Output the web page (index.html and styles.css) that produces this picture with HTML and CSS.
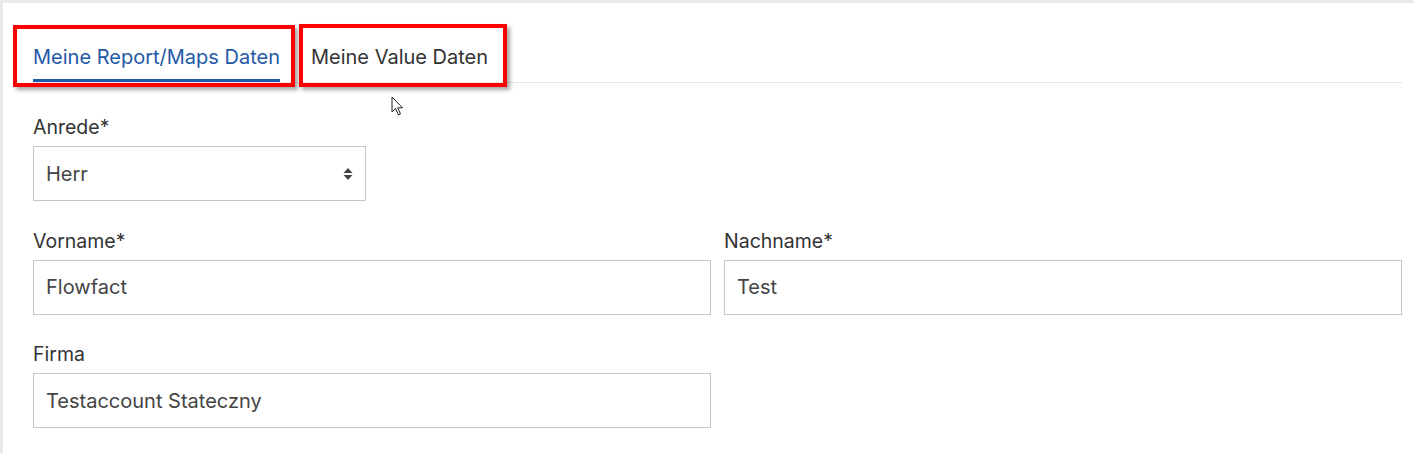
FILE: index.html
```html
<!DOCTYPE html>
<html lang="de">
<head>
<meta charset="utf-8">
<link rel="stylesheet" href="styles.css">
</head>
<body>
<div class="frame">
  <div class="content">
    <nav class="tabs">
      <div class="tab active">Meine Report/Maps Daten</div>
      <div class="tab">Meine Value Daten</div>
    </nav>
    <form class="form">
      <div class="row">
        <div class="field narrow">
          <label class="label">Anrede*</label>
          <div class="control select">
            <span>Herr</span>
            <svg class="caret" width="10" height="14" viewBox="0 0 10 14"><path d="M5 1 L9.5 6 H0.5 Z M5 13 L9.5 8 H0.5 Z" fill="#444"/></svg>
          </div>
        </div>
      </div>
      <div class="row two">
        <div class="field">
          <label class="label">Vorname*</label>
          <div class="control">Flowfact</div>
        </div>
        <div class="field">
          <label class="label">Nachname*</label>
          <div class="control">Test</div>
        </div>
      </div>
      <div class="row two">
        <div class="field">
          <label class="label">Firma</label>
          <div class="control">Testaccount Stateczny</div>
        </div>
      </div>
    </form>
  </div>
  <div class="mark mark-1"></div>
  <div class="mark mark-2"></div>
  <svg class="cursor" width="14" height="22" viewBox="0 0 14 22"><path d="M1 1 V16 L4.5 12.5 L7.5 19 L9.5 18 L6.7 11.8 H11.5 Z" fill="#fff" stroke="#222" stroke-width="1" stroke-linejoin="round"/></svg>
</div>
</body>
</html>
```
FILE: styles.css
```css
html, body {
  margin: 0;
  padding: 0;
  background: #fff;
}
body {
  font-family: Inter, "Noto Sans", sans-serif;
  color: #3c3c3c;
}
.frame {
  position: relative;
  height: 453px;
  box-sizing: border-box;
  border-top: 3px solid #e9e9e9;
  border-left: 3px solid #e9e9e9;
  padding: 0 12px 0 30px;
  overflow: hidden;
}
.content {
  display: flex;
  flex-direction: column;
}
.tabs {
  display: flex;
  gap: 31px;
  margin-top: 30px;
  border-bottom: 1px solid #e6e6e6;
}
.tab {
  font-size: 20px;
  line-height: 24px;
  padding: 12px 0 13px;
  color: #333;
}
.tab.active {
  color: #2459a6;
  box-shadow: inset 0 -3px 0 #1f5aa8;
}
.form {
  display: flex;
  flex-direction: column;
  gap: 28.5px;
  margin-top: 33px;
}
.row {
  display: flex;
}
.row.two {
  display: grid;
  grid-template-columns: 1fr 1fr;
  column-gap: 13px;
}
.field {
  display: flex;
  flex-direction: column;
  gap: 8px;
}
.field.narrow {
  width: 333px;
}
.label {
  font-size: 19.5px;
  line-height: 22px;
  color: #333;
}
.control {
  height: 55px;
  box-sizing: border-box;
  border: 1px solid #c3c6cc;
  padding: 0 12px;
  display: flex;
  align-items: center;
  font-size: 20px;
  color: #444;
}
.select {
  justify-content: space-between;
}
.mark {
  position: absolute;
  border: 4px solid #ff0000;
  box-sizing: border-box;
  box-shadow: 3px 3px 4px rgba(0,0,0,0.35);
}
.mark-1 {
  left: 10px;
  top: 22px;
  width: 282px;
  height: 62px;
}
.mark-2 {
  left: 296px;
  top: 21px;
  width: 208px;
  height: 63px;
}
.cursor {
  position: absolute;
  left: 388px;
  top: 93px;
}
```
